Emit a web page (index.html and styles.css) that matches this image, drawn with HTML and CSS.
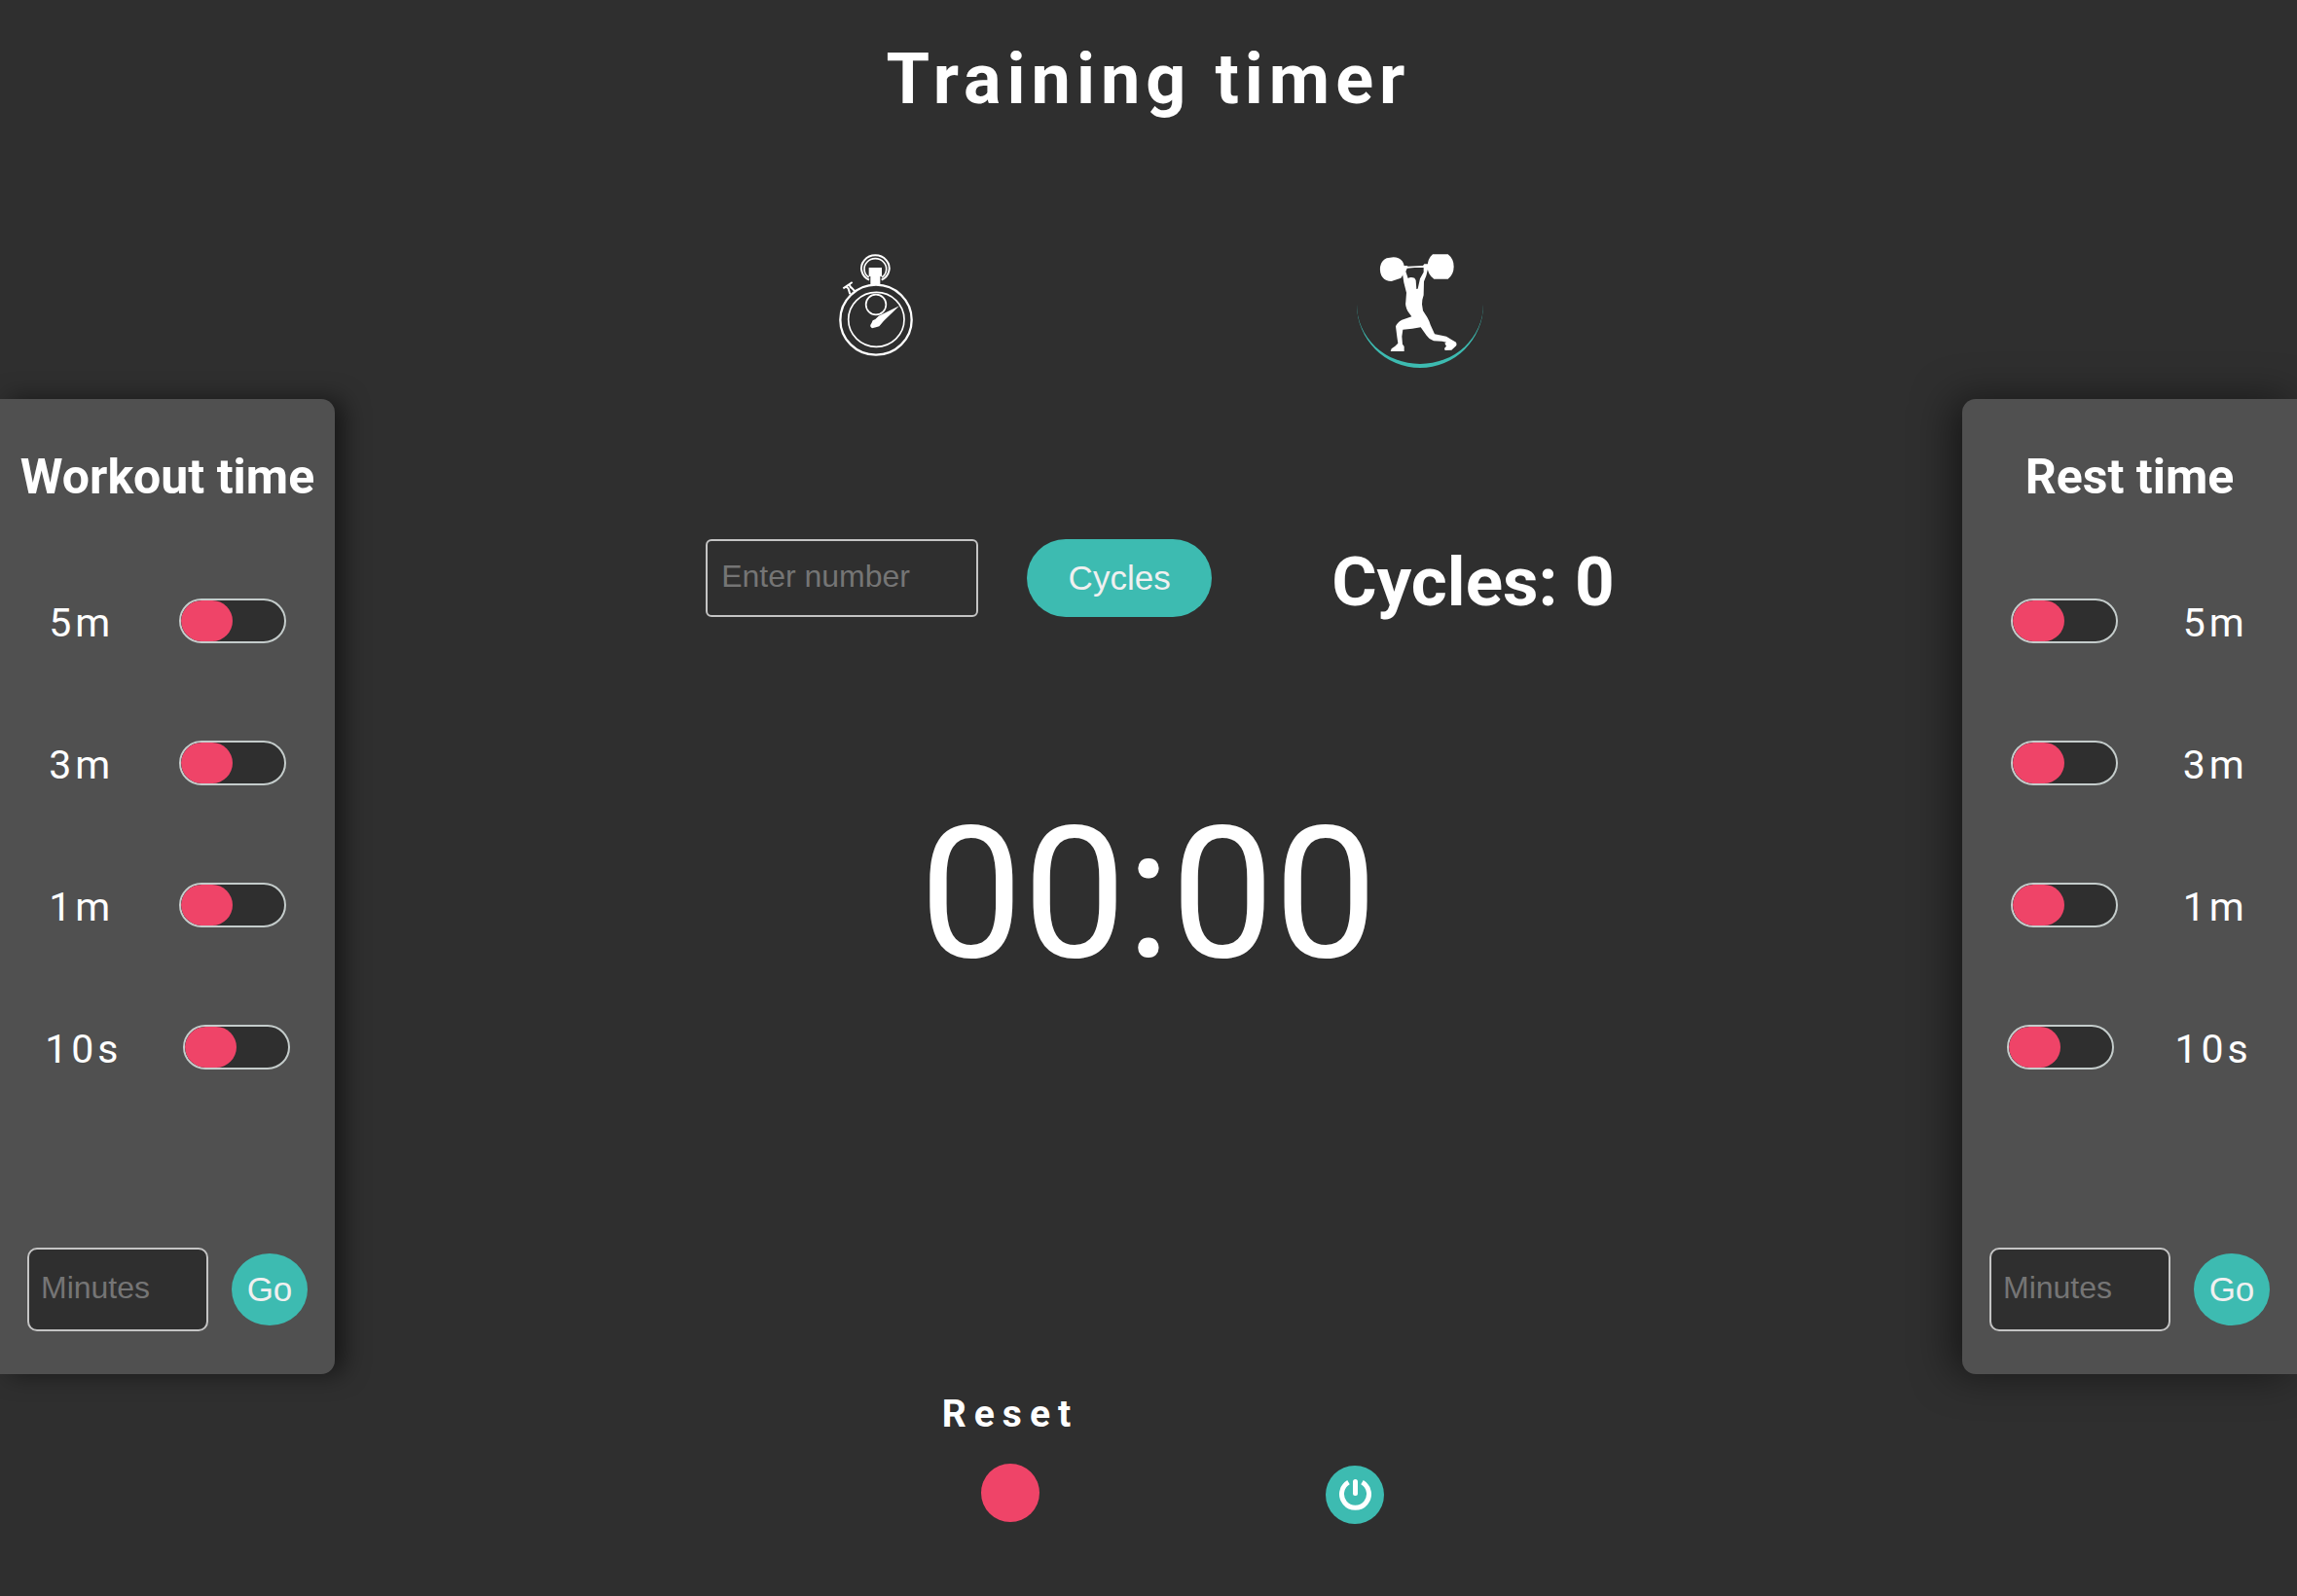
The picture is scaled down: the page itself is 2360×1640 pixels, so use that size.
FILE: index.html
```html
<!DOCTYPE html>
<html lang="en">
<head>
  <meta charset="utf-8">
  <meta name="viewport" content="width=device-width, initial-scale=1">
  <title>Training timer</title>
  <link rel="stylesheet" href="styles.css">
</head>
<body>
  <div class="layout">
    <aside class="panel panel--workout">
      <h2 class="panel__title">Workout time</h2>
      <div class="options">
        <div class="option"><label class="option__label" for="w5">5m</label><input class="switch" type="checkbox" id="w5"></div>
        <div class="option"><label class="option__label" for="w3">3m</label><input class="switch" type="checkbox" id="w3"></div>
        <div class="option"><label class="option__label" for="w1">1m</label><input class="switch" type="checkbox" id="w1"></div>
        <div class="option"><label class="option__label" for="w10">10s</label><input class="switch" type="checkbox" id="w10"></div>
      </div>
      <form class="custom">
        <input class="field custom__field" type="text" placeholder="Minutes" aria-label="Workout minutes">
        <button class="pill custom__go" type="button">Go</button>
      </form>
    </aside>

    <main class="stage">
      <h1 class="title">Training timer</h1>

      <nav class="modes">
        <button class="mode" type="button" aria-label="Stopwatch">
          <svg class="mode__icon" viewBox="-15 24 390 378" fill="none" stroke="#fff">
            <ellipse cx="180" cy="266" rx="110" ry="108" stroke-width="7"/>
            <ellipse cx="181" cy="265" rx="86" ry="84" stroke-width="5"/>
            <circle cx="180" cy="219" r="31" stroke-width="5"/>
            <path d="M159 143A43 40 0 1 1 197 143" stroke-width="6"/>
            <path d="M158 135A34 32 0 1 1 198 135" stroke-width="5"/>
            <path d="M158 105H198V132H193V158H163V132H158Z" fill="#fff" stroke="none"/>
            <path d="M252 223L188 254Q180 264 170 268Q167 276 164 280Q160 287 168 292Q174 291 180 289L190 286L204 269Z" fill="#fff" stroke="none"/>
            <path d="M79 169L107 150M83 166Q91 163 95 170L100 187M98 156Q100 166 106 168L115 178" stroke-width="6"/>
          </svg>
        </button>
        <button class="mode mode--active" type="button" aria-label="Workout">
          <svg class="mode__icon" viewBox="42 24 390 378" fill="#fff">
            <path d="M134 76L155 73Q172 73 182 85Q190 96 188 111Q187 127 178 137L149 147Q131 147 121 134Q112 123 114 103Q117 84 134 76Z"/>
            <path d="M276 64H323Q341 78 341 102Q341 126 323 140H280Q260 126 260 102Q260 78 276 64Z"/>
            <path d="M184 100L196 99L200 101L246 99L250 94H264V106L260 113Q258 128 249 148L248 190Q242 207 243 218L246 238L259 258Q266 270 269 281L282 310L318 317L334 327L348 335Q352 344 346 348L334 359L314 360L312 354L318 347L313 338L318 335L305 332L279 331Q265 326 257 314L239 289L213 293L184 296L181 317L183 341L188 348V363H146L149 355L160 347L169 338L166 318L162 286Q165 275 181 266L211 256L199 239Q190 222 193 210L195 182L187 151L183 124ZM197 107L193 117L200 138Q207 133 220 137L224 144L226 171L230 170L237 139L248 119V105L220 105Z" fill-rule="evenodd"/>
          </svg>
        </button>
      </nav>

      <form class="cycles">
        <input class="field cycles__field" type="text" placeholder="Enter number" aria-label="Number of cycles">
        <button class="pill cycles__button" type="button">Cycles</button>
        <output class="cycles__count">Cycles: 0</output>
      </form>

      <time class="clock">00:00</time>

      <div class="controls">
        <div class="reset">
          <label class="reset__label" for="reset">Reset</label>
          <button class="round round--reset" type="button" id="reset"></button>
        </div>
        <button class="round round--power" type="button" aria-label="Start">
          <svg class="round__icon" viewBox="0 0 60 60" fill="none" stroke="#fff" stroke-width="5">
            <path d="M23.500 17.200A14 14 0 1 0 37.500 17.200"/>
            <path d="M30.500 16.500V28.500" stroke-linecap="round"/>
          </svg>
        </button>
      </div>
    </main>

    <aside class="panel panel--rest">
      <h2 class="panel__title">Rest time</h2>
      <div class="options">
        <div class="option"><label class="option__label" for="r5">5m</label><input class="switch" type="checkbox" id="r5"></div>
        <div class="option"><label class="option__label" for="r3">3m</label><input class="switch" type="checkbox" id="r3"></div>
        <div class="option"><label class="option__label" for="r1">1m</label><input class="switch" type="checkbox" id="r1"></div>
        <div class="option"><label class="option__label" for="r10">10s</label><input class="switch" type="checkbox" id="r10"></div>
      </div>
      <form class="custom">
        <input class="field custom__field" type="text" placeholder="Minutes" aria-label="Rest minutes">
        <button class="pill custom__go" type="button">Go</button>
      </form>
    </aside>
  </div>
</body>
</html>
```
FILE: styles.css
```css
:root {
  --bg: #2f2f2f;
  --panel: #505050;
  --teal: #3dbbb1;
  --pink: #ef4468;
  --line: #c4c4c4;
}

* {
  box-sizing: border-box;
}

body {
  margin: 0;
  background: var(--bg);
  color: #fff;
  font-family: Roboto, sans-serif;
}

h1,
h2 {
  margin: 0;
}

button {
  margin: 0;
  padding: 0;
  border: 0;
  cursor: pointer;
}

.layout {
  display: grid;
  grid-template-columns: 344px 1fr 344px;
  align-items: start;
  min-height: 100vh;
  overflow: hidden;
}

/* side panels */
.panel {
  margin-top: 25vh;
  padding: 50px 0 44px;
  background: var(--panel);
}

.panel--workout {
  border-radius: 0 14px 14px 0;
  box-shadow: 10px 0 24px rgba(0, 0, 0, 0.5);
}

.panel--rest {
  border-radius: 14px 0 0 14px;
  box-shadow: -10px 0 40px rgba(0, 0, 0, 0.5);
}

.panel__title {
  font-size: 50px;
  line-height: 60px;
  text-align: center;
  white-space: nowrap;
}

.options {
  display: grid;
  gap: 96px;
  margin-top: 93px;
}

.option {
  display: flex;
  justify-content: space-evenly;
  align-items: center;
  height: 50px;
}

.option__label {
  margin-right: 16px;
  padding-top: 4px;
  font-size: 41px;
  line-height: 50px;
  letter-spacing: 4px;
}

.panel--rest .option {
  flex-direction: row-reverse;
}

.panel--rest .option__label {
  margin: 0 0 0 16px;
}

.switch {
  appearance: none;
  width: 110px;
  height: 46px;
  margin: 0;
  overflow: hidden;
  border: 2px solid #c4cccb;
  border-radius: 23px;
  background: var(--bg);
  cursor: pointer;
}

.switch::before {
  content: "";
  display: block;
  width: 53px;
  height: 42px;
  border-radius: 21px;
  background: var(--pink);
}

.switch:checked::before {
  margin-left: auto;
}

.custom {
  display: flex;
  justify-content: center;
  align-items: center;
  gap: 24px;
  margin-top: 181px;
}

.field {
  padding: 0 14px 4px;
  border: 2px solid var(--line);
  background: var(--bg);
  color: #fff;
  font-family: "Liberation Sans", Arial, sans-serif;
  font-size: 32px;
}

.field::placeholder {
  color: #757575;
}

.pill {
  background: var(--teal);
  color: #f0f0f0;
  font-family: "Liberation Sans", Arial, sans-serif;
  font-size: 35px;
}

.custom__field {
  width: 186px;
  height: 86px;
  padding-left: 12px;
  border-radius: 10px;
}

.custom__go {
  width: 78px;
  height: 74px;
  border-radius: 50%;
}

/* centre column */
.stage {
  display: flex;
  flex-direction: column;
  align-items: center;
}

.title {
  margin-top: 40px;
  font-size: 72px;
  line-height: 84px;
  letter-spacing: 6px;
}

.modes {
  display: flex;
  gap: 429px;
  margin-top: 124px;
  padding-right: 2px;
}

.mode {
  width: 130px;
  height: 130px;
  border-bottom: 4px solid transparent;
  border-radius: 50%;
  background: none;
}

.mode--active {
  border-bottom-color: var(--teal);
}

.mode__icon {
  display: block;
  width: 130px;
  height: 126px;
}

.cycles {
  display: flex;
  align-items: flex-start;
  margin-top: 176px;
  padding-left: 24px;
}

.cycles__field {
  width: 280px;
  height: 80px;
  border-radius: 6px;
}

.cycles__button {
  width: 190px;
  height: 80px;
  margin-left: 50px;
  border-radius: 40px;
}

.cycles__count {
  margin-left: 123px;
  padding-top: 2px;
  font-size: 71px;
  font-weight: 700;
  line-height: 84px;
}

.clock {
  margin-top: 168px;
  font-size: 189px;
  line-height: 222px;
}

.controls {
  display: flex;
  align-items: flex-end;
  gap: 254px;
  margin-top: 400px;
  padding-left: 30px;
}

.reset {
  display: flex;
  flex-direction: column;
  align-items: center;
  gap: 28px;
  padding-bottom: 2px;
}

.reset__label {
  font-size: 39px;
  font-weight: 700;
  line-height: 46px;
  letter-spacing: 8px;
}

.round {
  width: 60px;
  height: 60px;
  border-radius: 50%;
}

.round--reset {
  background: var(--pink);
}

.round--power {
  background: var(--teal);
}

.round__icon {
  display: block;
  width: 60px;
  height: 60px;
}
```
